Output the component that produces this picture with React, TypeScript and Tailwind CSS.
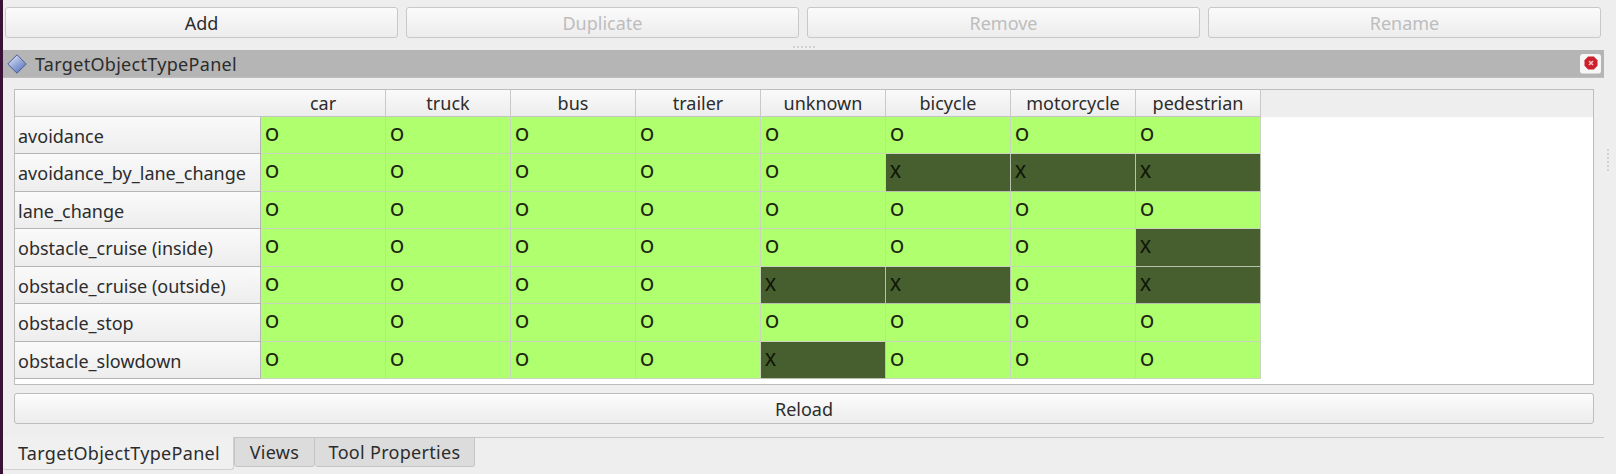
const cols = ["car", "truck", "bus", "trailer", "unknown", "bicycle", "motorcycle", "pedestrian"];
const rows: [string, string, number][] = [
  ["avoidance", "OOOOOOOO", 37],
  ["avoidance_by_lane_change", "OOOOOXXX", 38],
  ["lane_change", "OOOOOOOO", 37],
  ["obstacle_cruise (inside)", "OOOOOOOX", 38],
  ["obstacle_cruise (outside)", "OOOOXXOX", 37],
  ["obstacle_stop", "OOOOOOOO", 38],
  ["obstacle_slowdown", "OOOOXOOO", 37],
];

function Btn({ label, disabled }: { label: string; disabled?: boolean }) {
  return (
    <button
      className={
        "flex-1 h-[31px] rounded-[3px] border border-[#c8c8c8] bg-gradient-to-b from-[#fbfbfb] to-[#ececec] text-center leading-[28px] " +
        (disabled ? "text-[#bdbdbd]" : "text-[#2c2c2c]")
      }
    >
      {label}
    </button>
  );
}

function DiamondIcon() {
  return (
    <svg width="20" height="20" viewBox="0 0 20 20" className="shrink-0">
      <defs>
        <linearGradient id="dia" x1="0.2" y1="0.1" x2="0.8" y2="0.9">
          <stop offset="0" stopColor="#d5dcf0" />
          <stop offset="0.55" stopColor="#8fa3d6" />
          <stop offset="1" stopColor="#5f78bb" />
        </linearGradient>
      </defs>
      <path d="M10 0.8 L19.2 10 L10 19.2 L0.8 10 Z" fill="url(#dia)" stroke="#4a5c9c" strokeWidth="1" strokeLinejoin="round" />
    </svg>
  );
}

function CloseIcon() {
  return (
    <div className="w-[21px] h-[20px] rounded-[3px] bg-[#f6f6f6] border-b border-[#d8d8d8] flex items-center justify-center">
      <svg width="14" height="14" viewBox="0 0 14 14">
        <path d="M4.2 0.5 H9.8 L13.5 4.2 V9.8 L9.8 13.5 H4.2 L0.5 9.8 V4.2 Z" fill="#cb1f2b" />
        <path d="M5 5 L9 9 M9 5 L5 9" stroke="#f3c2c6" strokeWidth="1.6" />
      </svg>
    </div>
  );
}

function Dots({ vertical }: { vertical?: boolean }) {
  return (
    <div className={"flex gap-[2px] " + (vertical ? "flex-col" : "flex-row")}>
      {Array.from({ length: 6 }).map((_, i) => (
        <div key={i} className="w-[2px] h-[2px] bg-[#d2d2d2]" />
      ))}
    </div>
  );
}

export default function App() {
  return (
    <div
      className="w-[1616px] h-[474px] overflow-hidden flex bg-[#eeeeee] text-[18px] text-[#2c2c2c]"
      style={{ fontFamily: '"Noto Sans", sans-serif' }}
    >
      <div className="w-[3px] shrink-0 bg-[#3a1238]" />
      <div className="flex-1 flex flex-col min-w-0">
        <div className="flex gap-[8px] pl-[2px] pr-[15px] pt-[7px] h-[43px]">
          <Btn label="Add" />
          <Btn label="Duplicate" disabled />
          <Btn label="Remove" disabled />
          <Btn label="Rename" disabled />
        </div>
        <div className="h-[7px] flex justify-center items-center pr-[12px]">
          <Dots />
        </div>
        <div className="flex items-center mr-[12px] h-[28px] bg-[#b5b5b5] pl-[4px] pr-[3px] border-b border-[#bebebe]">
          <DiamondIcon />
          <span className="ml-[8px] leading-[26px] tracking-[0.3px]">TargetObjectTypePanel</span>
          <div className="ml-auto">
            <CloseIcon />
          </div>
        </div>
        <div className="flex flex-1 min-h-0">
          <div className="w-[1591px] shrink-0 flex flex-col pt-[11px] pl-[11px]">
            <div className="h-[296px] w-[1580px] bg-white border border-[#bdbdbd] overflow-hidden">
              <div className="flex h-[27px] bg-[#eeeeee]">
                <div className="w-[246px] shrink-0 bg-gradient-to-b from-[#fafafa] to-[#ededed] border-b border-[#c4c4c4]" />
                {cols.map((c) => (
                  <div
                    key={c}
                    className="w-[125px] shrink-0 text-center leading-[26px] bg-gradient-to-b from-[#fafafa] to-[#ededed] border-r border-[#c9c9c9] border-b border-b-[#c4c4c4]"
                  >
                    {c}
                  </div>
                ))}
              </div>
              {rows.map(([name, vals, h]) => (
                <div key={name} className="flex" style={{ height: h }}>
                  <div className="w-[246px] shrink-0 pl-[3px] leading-[38px] whitespace-nowrap bg-gradient-to-b from-[#fafafa] to-[#ededed] border-r border-b border-[#b5b5b5]">
                    {name}
                  </div>
                  {vals.split("").map((v, i) => (
                    <div
                      key={i}
                      className={
                        "w-[125px] shrink-0 pl-[4px] leading-[35px] font-medium border-r border-b " +
                        (v === "O"
                          ? "bg-[#b0ff6f] border-[#c8d4bc] text-[#1c260e]"
                          : "bg-[#475f2e] border-[#b8c0b0] text-[#0f1707]")
                      }
                    >
                      {v}
                    </div>
                  ))}
                </div>
              ))}
            </div>
            <button className="mt-[8px] h-[31px] w-[1580px] rounded-[3px] border border-[#bdbdbd] bg-gradient-to-b from-[#fcfcfc] to-[#ececec] text-center leading-[28px] text-[#2c2c2c]">
              Reload
            </button>
          </div>
          <div className="flex-1 flex items-center justify-center pb-[196px] pl-[6px]">
            <Dots vertical />
          </div>
        </div>
        <div className="h-[37px] mr-[12px] mt-auto border-t border-[#c8c8c8] flex items-start text-[#2c2c2c] tracking-[0.3px]">
          <div className="-mt-px w-[231px] h-[33px] bg-[#f0f0f0] rounded-b-[3px] border-b border-r border-[#d0d0d0] pl-[15px] leading-[33px] whitespace-nowrap">
            TargetObjectTypePanel
          </div>
          <div className="-mt-px w-[81px] h-[30px] bg-[#dcdcdc] rounded-b-[3px] border border-[#c4c4c4] text-center leading-[29px]">
            Views
          </div>
          <div className="-mt-px w-[160px] h-[30px] bg-[#dcdcdc] rounded-b-[3px] border border-l-0 border-[#c4c4c4] text-center leading-[29px] whitespace-nowrap">
            Tool Properties
          </div>
        </div>
      </div>
    </div>
  );
}
